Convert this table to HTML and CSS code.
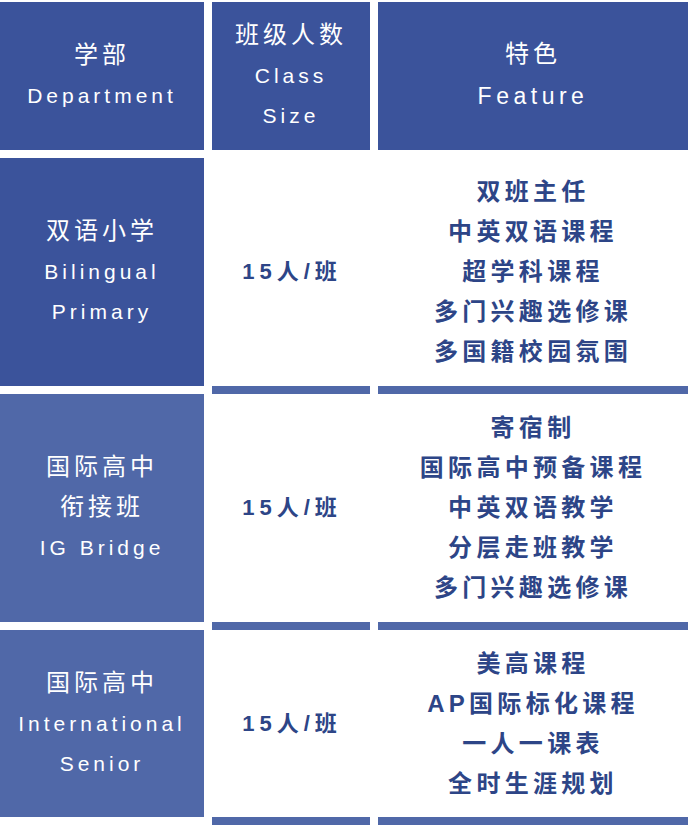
FILE: index.html
```html
<!DOCTYPE html>
<html lang="zh-CN">
<head>
<meta charset="utf-8">
<title>学部 班级人数 特色</title>
<link rel="stylesheet" href="styles.css">
</head>
<body>
<div class="table">
  <div class="head dark">
    <span class="zh">学部</span>
    <span class="en">Department</span>
  </div>
  <div class="head dark">
    <span class="zh">班级人数</span>
    <span class="en">Class</span>
    <span class="en">Size</span>
  </div>
  <div class="head dark">
    <span class="zh">特色</span>
    <span class="en big">Feature</span>
  </div>

  <div class="dept dark">
    <span class="zh">双语小学</span>
    <span class="en">Bilingual</span>
    <span class="en">Primary</span>
  </div>
  <div class="cell">
    <span class="size">15人/班</span>
  </div>
  <div class="cell">
    <span class="feat">双班主任</span>
    <span class="feat">中英双语课程</span>
    <span class="feat">超学科课程</span>
    <span class="feat">多门兴趣选修课</span>
    <span class="feat">多国籍校园氛围</span>
  </div>

  <div class="dept light">
    <span class="zh">国际高中</span>
    <span class="zh">衔接班</span>
    <span class="en">IG Bridge</span>
  </div>
  <div class="cell">
    <span class="size">15人/班</span>
  </div>
  <div class="cell">
    <span class="feat">寄宿制</span>
    <span class="feat">国际高中预备课程</span>
    <span class="feat">中英双语教学</span>
    <span class="feat">分层走班教学</span>
    <span class="feat">多门兴趣选修课</span>
  </div>

  <div class="dept light short">
    <span class="zh">国际高中</span>
    <span class="en">International</span>
    <span class="en">Senior</span>
  </div>
  <div class="cell short">
    <span class="size">15人/班</span>
  </div>
  <div class="cell short">
    <span class="feat">美高课程</span>
    <span class="feat">AP国际标化课程</span>
    <span class="feat">一人一课表</span>
    <span class="feat">全时生涯规划</span>
  </div>
</div>
</body>
</html>
```

FILE: styles.css
```css
html, body {
  margin: 0;
  padding: 0;
  background: #ffffff;
}

body {
  width: 690px;
  height: 828px;
  overflow: hidden;
  font-family: "Liberation Sans", "Noto Sans CJK SC", sans-serif;
}

.table {
  display: grid;
  grid-template-columns: 204px 158px 310px;
  column-gap: 8px;
  padding-top: 2px;
}

.head,
.dept,
.cell {
  display: flex;
  flex-direction: column;
  align-items: center;
  justify-content: center;
  text-align: center;
}

.head {
  height: 148px;
  margin-bottom: 8px;
  color: #ffffff;
}

.dept {
  height: 228px;
  margin-bottom: 8px;
  color: #ffffff;
}

.cell {
  height: 228px;
  border-bottom: 8px solid #5068a8;
  color: #2d4587;
}

.dept.short,
.cell.short {
  height: 187px;
}

.dark {
  background: #3b539b;
}

.light {
  background: #5068a8;
}

.zh {
  display: block;
  font-family: "Noto Sans CJK SC", sans-serif;
  font-size: 24px;
  letter-spacing: 4px;
  line-height: 40px;
  font-weight: 400;
  margin-top: -3px;
  margin-bottom: 3px;
}

.en {
  display: block;
  font-family: "Liberation Sans", "Noto Sans CJK SC", sans-serif;
  font-size: 21px;
  letter-spacing: 4px;
  line-height: 40px;
}

.en.big {
  font-size: 23px;
  letter-spacing: 4.5px;
  line-height: 42px;
}

.size {
  display: block;
  font-family: "Liberation Sans", "Noto Sans CJK SC", sans-serif;
  font-size: 22px;
  font-weight: 700;
  letter-spacing: 5px;
  line-height: 40px;
  padding-left: 2px;
}

.feat {
  display: block;
  font-family: "Liberation Sans", "Noto Sans CJK SC", sans-serif;
  font-size: 24px;
  font-weight: 700;
  letter-spacing: 4.3px;
  line-height: 40px;
}
```
